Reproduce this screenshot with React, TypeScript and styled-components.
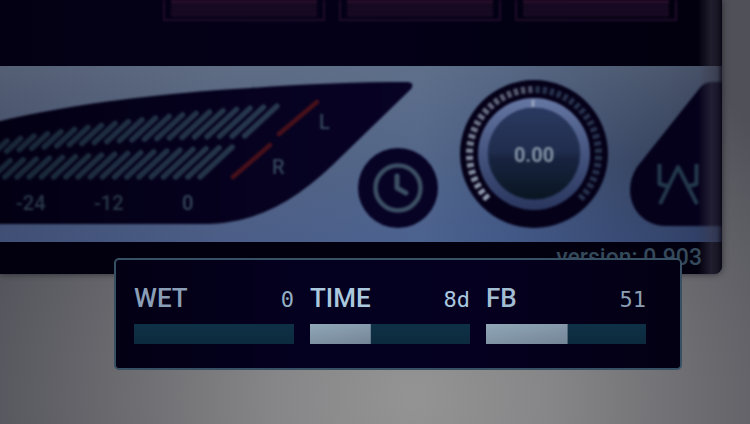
import React, { useState } from "react";
import styled, { createGlobalStyle } from "styled-components";

const GlobalStyle = createGlobalStyle`
  * { box-sizing: border-box; }
  body {
    margin: 0;
    background: #55555d;
    font-family: Roboto, sans-serif;
  }
`;

const Page = styled.main`
  position: relative;
  min-height: 100vh;
  overflow: hidden;
  padding-right: 28px;
  background: radial-gradient(ellipse 62% 95% at 55% 94%, #949494 0%, #868688 30%, #67676c 68%, #505059 100%);
`;

const Device = styled.section`
  position: relative;
  overflow: hidden;
  border-radius: 0 0 8px 0;
  background: #02000f;
  box-shadow: 0 0 6px rgba(20, 20, 28, 0.7);

  &::after {
    content: "";
    position: absolute;
    inset: 0 0 0 auto;
    width: 24px;
    pointer-events: none;
    background: linear-gradient(90deg, transparent, rgba(62, 60, 76, 0.5) 55%, rgba(48, 46, 60, 0.5) 80%, rgba(12, 10, 22, 0.8));
  }
`;

const Deck = styled.div`
  display: grid;
  grid-template-columns: repeat(3, 162px);
  justify-content: end;
  gap: 14px;
  height: 66px;
  padding-right: 45px;
  background: linear-gradient(90deg, #040014, #030018 50%, #02000d);
`;

const Slot = styled.div`
  height: 21px;
  padding: 0 6px 2px;
  border: 2px solid #200c2b;
  border-top: 0;
  filter: blur(1px);

  &::before {
    content: "";
    display: block;
    height: 17px;
    background:
      linear-gradient(180deg, #2c0e2b 0 2px, transparent 3px),
      repeating-linear-gradient(180deg, #140820 0 3px, #190a24 3px 5px);
  }
`;

const Console = styled.div`
  display: flex;
  justify-content: flex-end;
  align-items: flex-end;
  gap: 22px;
  padding: 14px 0;
  background:
    linear-gradient(180deg, rgba(118, 128, 140, 0.34), rgba(90, 105, 140, 0) 55%, rgba(52, 82, 160, 0.24)),
    linear-gradient(90deg, #434e69 0%, #52617f 30%, #53678a 58%, #475b80 70%, #36435f 92%, #2a3450 100%);

  svg {
    display: block;
    overflow: visible;
    filter: blur(1px);
  }
`;

const Meter = styled.div`
  flex: none;
  margin-right: -77px;
`;

const ClockButton = styled.button`
  position: relative;
  flex: none;
  padding: 0;
  border: 0;
  border-radius: 50%;
  background: none;
  cursor: pointer;
`;

const KnobLabel = styled.label`
  position: relative;
  flex: none;
`;

const KnobInput = styled.input`
  position: absolute;
  inset: 0;
  width: 100%;
  height: 100%;
  margin: 0;
  opacity: 0;
`;

const Logo = styled.div`
  flex: none;
`;

const SvgText = styled.text<{ $bold?: boolean }>`
  font-family: Roboto, sans-serif;
  font-size: 20px;
  font-weight: ${(p) => (p.$bold ? 700 : 500)};
`;

const Footer = styled.footer`
  height: 32px;
  padding-right: 20px;
  color: #34495a;
  font-size: 23px;
  font-weight: 500;
  line-height: 32px;
  text-align: right;
`;

const Popup = styled.form`
  position: absolute;
  top: 258px;
  left: 114px;
  right: 68px;
  display: grid;
  grid-template-columns: repeat(3, 1fr);
  gap: 16px;
  padding: 18px 34px 24px 18px;
  border: 2px solid #385064;
  border-radius: 5px;
  background: linear-gradient(90deg, #030014, #040020 35%, #05001f 65%, #030013);
`;

const Param = styled.div`
  display: grid;
  gap: 6px;
`;

const ParamHead = styled.div`
  display: flex;
  justify-content: space-between;
  align-items: baseline;
  height: 40px;
  line-height: 40px;
`;

const ParamName = styled.label<{ $tone: string }>`
  color: ${(p) => p.$tone};
  font-size: 26px;
  font-weight: 500;
`;

const ParamValue = styled.output<{ $tone: string }>`
  color: ${(p) => p.$tone};
  font-family: "DejaVu Sans Mono", monospace;
  font-size: 22px;
`;

const Slider = styled.input`
  appearance: none;
  display: block;
  width: 100%;
  height: 20px;
  margin: 0;
  cursor: pointer;
  background:
    linear-gradient(170deg, #90a8b7, #748497) 0 0 / var(--fill) 100% no-repeat,
    linear-gradient(180deg, #0e3147, #0d2a3d);

  &::-webkit-slider-thumb {
    appearance: none;
    width: 1px;
    height: 20px;
    opacity: 0;
  }
`;

const leftBars = Array.from({ length: 22 }, (_, i) => {
  const d = i * 13.5;
  const y = 106 + 0.075 * d + 0.0002 * d * d;
  const h = 30 - 0.067 * d;
  return { x1: 277 - d, y1: y, x2: 277 - d - h * 1.08, y2: y + h };
});

const rightBars = Array.from({ length: 18 }, (_, i) => {
  const h = 30 - 0.8 * i;
  const x = 200 - i * 12.2;
  return { x1: x + h * 1.07, y1: 177 - h, x2: x, y2: 177 };
});

function MeterDrawing() {
  return (
    <svg width="413" height="148" viewBox="0 80 413 148" role="img" aria-label="Output level">
      <defs>
        <linearGradient id="meterFill">
          <stop offset="0" stopColor="#030014" />
          <stop offset="1" stopColor="#080326" />
        </linearGradient>
        <linearGradient id="barFill" gradientUnits="userSpaceOnUse" x1="0" y1="0" x2="280" y2="0">
          <stop offset="0" stopColor="#182638" />
          <stop offset="1" stopColor="#28394f" />
        </linearGradient>
      </defs>
      <path
        d="M-4 122C76 103 165 93 250 88C305 84 360 82 408 82Q415 83 411 89L344 154C300 198 260 224 202 224H-4Z"
        fill="url(#meterFill)"
      />
      <g stroke="url(#barFill)" strokeWidth="5.4" strokeLinecap="round">
        {[...leftBars, ...rightBars].map((b, i) => (
          <line key={i} {...b} />
        ))}
      </g>
      <path d="M279 134L317 102M233 177L270 145" stroke="#47101a" strokeWidth="4.5" strokeLinecap="round" />
      <g fill="#34465a">
        <SvgText x="319" y="129">L</SvgText>
        <SvgText x="272" y="174">R</SvgText>
        <SvgText x="182" y="210">0</SvgText>
      </g>
      <g fill="#293849">
        <SvgText x="94" y="210">-12</SvgText>
        <SvgText x="16" y="210">-24</SvgText>
      </g>
    </svg>
  );
}

const ticks = Array.from({ length: 42 }, (_, i) => ({
  angle: (i - 20.5) * 6.45,
  color: i < 21 ? `rgba(160, 172, 192, ${0.9 - i * 0.022})` : "#26304a",
}));

function KnobDrawing() {
  return (
    <svg width="148" height="148" viewBox="-74 -74 148 148" aria-hidden="true">
      <defs>
        <linearGradient id="knobRing" x2="0" y2="1">
          <stop offset="0" stopColor="#6577a3" />
          <stop offset="0.5" stopColor="#44547e" />
          <stop offset="1" stopColor="#2a365e" />
        </linearGradient>
        <linearGradient id="knobFace" x2="0" y2="1">
          <stop offset="0" stopColor="#2a3960" />
          <stop offset="0.48" stopColor="#202d4d" />
          <stop offset="0.54" stopColor="#182440" />
          <stop offset="1" stopColor="#091521" />
        </linearGradient>
      </defs>
      <circle r="74" fill="#050119" />
      {ticks.map((t) => (
        <line key={t.angle} y1="-68" y2="-61" stroke={t.color} strokeWidth="4.4" transform={`rotate(${t.angle})`} />
      ))}
      <circle r="56" fill="url(#knobRing)" />
      <circle r="46" fill="url(#knobFace)" stroke="#26345a" />
      <path d="M-1 -54V-47" stroke="#98a4bd" strokeWidth="3" />
      <SvgText $bold y="8" textAnchor="middle" fill="#8391a3">0.00</SvgText>
    </svg>
  );
}

type ParamSpec = { id: string; name: string; value: number; format: (v: number) => string; tone: string; dim: string };

const params: ParamSpec[] = [
  { id: "wet", name: "WET", value: 0, format: String, tone: "#8a9fb6", dim: "#94aec2" },
  { id: "time", name: "TIME", value: 38, format: (v) => (v === 38 ? "8d" : String(v)), tone: "#abc8de", dim: "#a8c8df" },
  { id: "fb", name: "FB", value: 51, format: String, tone: "#a3bed2", dim: "#8c9fb3" },
];

function ParamControl({ spec }: { spec: ParamSpec }) {
  const [value, setValue] = useState(spec.value);
  return (
    <Param>
      <ParamHead>
        <ParamName htmlFor={spec.id} $tone={spec.tone}>{spec.name}</ParamName>
        <ParamValue htmlFor={spec.id} $tone={spec.dim}>{spec.format(value)}</ParamValue>
      </ParamHead>
      <Slider
        id={spec.id}
        type="range"
        min={0}
        max={100}
        value={value}
        onChange={(e) => setValue(Number(e.target.value))}
        style={{ "--fill": `${value}%` } as React.CSSProperties}
      />
    </Param>
  );
}

export default function App() {
  return (
    <>
      <GlobalStyle />
      <Page>
        <Device>
          <Deck>
            <Slot />
            <Slot />
            <Slot />
          </Deck>
          <Console>
            <Meter>
              <MeterDrawing />
            </Meter>
            <ClockButton type="button" aria-label="Delay">
              <svg width="80" height="80" viewBox="-40 -40 80 80" fill="none" aria-hidden="true">
                <circle r="40" fill="#070325" />
                <circle r="22.5" stroke="#3c4f63" strokeWidth="4.5" />
                <path d="M-1 -12V0L8 5" stroke="#3c4f63" strokeWidth="5" strokeLinecap="round" strokeLinejoin="round" />
              </svg>
            </ClockButton>
            <KnobLabel>
              <KnobDrawing />
              <KnobInput type="range" min={-1} max={1} step={0.01} defaultValue={0} aria-label="Level" />
            </KnobLabel>
            <Logo>
              <svg width="92" height="148" viewBox="630 80 92 148" fill="none" role="img" aria-label="Logo">
                <path d="M726 82H712Q704 82 699 89L637 167C620 194 636 226 666 226H726Z" fill="#05011b" />
                <path
                  d="M659.5 164V184L667 186M696.5 164V184L689 186M660 204L678 167L697 204"
                  stroke="#23384b"
                  strokeWidth="4"
                  strokeLinejoin="round"
                />
              </svg>
            </Logo>
          </Console>
          <Footer>version: 0.903</Footer>
        </Device>
        <Popup>
          {params.map((p) => (
            <ParamControl key={p.id} spec={p} />
          ))}
        </Popup>
      </Page>
    </>
  );
}
